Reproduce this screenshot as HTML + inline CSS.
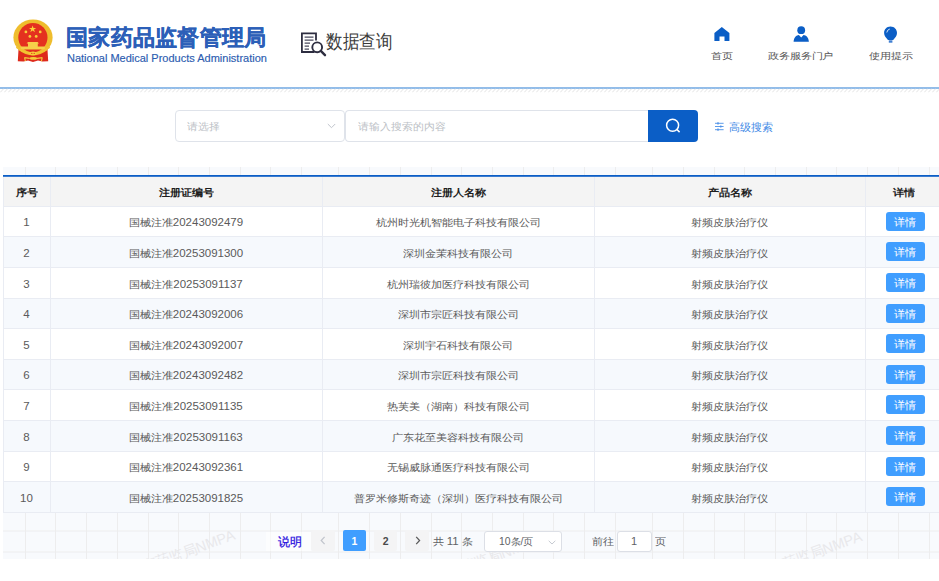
<!DOCTYPE html>
<html><head><meta charset="utf-8"><style>
*{margin:0;padding:0;box-sizing:border-box}
html,body{width:939px;height:581px;overflow:hidden;background:#fff;font-family:"Liberation Sans",sans-serif}
.a{position:absolute;white-space:nowrap}
.c{position:absolute;white-space:nowrap;text-align:center}
.k{display:inline-block;transform:scaleY(0.9)}
.d{font-size:11.5px}
</style></head><body>
<svg class="a" style="left:0;top:0" width="70" height="70" viewBox="0 0 70 70">
 <path d="M18.6 48 L17.8 61.2 L23.5 61.6 L28 60.6 L33 61.9 L38 60.6 L42.5 61.6 L48.2 61.2 L47.4 48 Z" fill="#de2a1c"/>
 <ellipse cx="33" cy="37.4" rx="19.6" ry="18" fill="#efbd2d"/>
 <circle cx="32.9" cy="37.6" r="14.6" fill="#e4311f"/>
 <polygon points="32.6,25.4 33.5,28 36.2,28 34,29.6 34.9,32.2 32.6,30.6 30.3,32.2 31.2,29.6 29,28 31.7,28" fill="#fad33a"/>
 <circle cx="25.9" cy="31.9" r="1.4" fill="#f7cf3a"/><circle cx="40.2" cy="31.9" r="1.4" fill="#f7cf3a"/>
 <circle cx="29.9" cy="36.4" r="1.4" fill="#f7cf3a"/><circle cx="36.2" cy="36.4" r="1.4" fill="#f7cf3a"/>
 <path d="M26.6 43.6 L28 42.1 L37.6 42.1 L39 43.6 Z M28 43.6 H37.8 V46.5 H28 Z M20.5 46.6 H44.8 V49.5 H20.5 Z" fill="#f6d04a"/>
 <path d="M16.5 47 Q33 60 49.5 47" stroke="#f2c232" stroke-width="2.2" fill="none"/>
 <ellipse cx="33" cy="53.4" rx="3.4" ry="1.8" fill="#f5cd3a"/>
 <circle cx="31.8" cy="53.4" r="0.6" fill="#e4311f"/><circle cx="34.2" cy="53.4" r="0.6" fill="#e4311f"/>
 <ellipse cx="33.4" cy="58.4" rx="3.7" ry="1.4" fill="#f5cd3a"/>
 <path d="M24.3 57.6 L29.8 58.4 M37 58.4 L42.5 57.6 M24.6 58 L25.4 61.2 M42.2 58 L41.4 61.2" stroke="#f3ca3a" stroke-width="1.1" fill="none"/>
</svg>
<div class="a" style="left:66px;top:23.5px;font-size:22px;line-height:28px;font-weight:bold;color:#2c5fb8;-webkit-text-stroke:0.3px #2c5fb8;letter-spacing:0.3px">国家药品监督管理局</div>
<div class="a" style="left:67px;top:51.5px;font-size:11px;line-height:13px;color:#2b5cb0;-webkit-text-stroke:0.15px #2b5cb0">National Medical Products Administration</div>
<svg class="a" style="left:300px;top:31px" width="28" height="27" viewBox="0 0 28 27">
 <path d="M14.5 21 H1.9 V2.4 H16 V9.5" fill="none" stroke="#2d2d40" stroke-width="1.8"/>
 <path d="M4.6 6 H13.5 M4.6 9 H13.5 M4.6 12 H10 M4.6 15 H9 M4.6 18 H9" stroke="#4a4a5e" stroke-width="1.25"/>
 <circle cx="17.2" cy="16.3" r="4.9" fill="#fff" stroke="#2d2d40" stroke-width="1.9"/>
 <path d="M20.8 19.9 L25 24.2" stroke="#2d2d40" stroke-width="2.4" stroke-linecap="round"/>
</svg>
<div class="a" style="left:326px;top:29px;font-size:19px;line-height:26px;color:#3a3a3a;transform:scaleX(0.87);transform-origin:0 0">数据查询</div>
<svg class="a" style="left:714px;top:27px" width="16" height="15" viewBox="0 0 16 15">
 <path d="M7.8 0 L15.4 6 V14 H10.5 V9.6 H5.5 V14 H0.4 V6 Z" fill="#0b5ec6"/>
</svg>
<svg class="a" style="left:793px;top:26px" width="17" height="16" viewBox="0 0 17 16">
 <circle cx="8.2" cy="4.2" r="3.9" fill="#0b5ec6"/>
 <path d="M0.6 15.7 C0.9 11.2 3.4 9.1 5.9 8.9 L8.2 11.4 L10.5 8.9 C13.1 9.1 15.6 11.2 15.9 15.7 Z" fill="#0b5ec6"/>
</svg>
<svg class="a" style="left:883px;top:26px" width="15" height="18" viewBox="0 0 15 18">
 <path d="M7.5 0.6 C11.3 0.6 14 3.5 14 6.9 C14 9.8 12.2 11.4 10.2 14 H5 C3 11.4 1.1 9.8 1.1 6.9 C1.1 3.5 3.7 0.6 7.5 0.6 Z" fill="#0b5ec6"/>
 <rect x="5.8" y="14.3" width="3.6" height="2.4" fill="#3f7fd2"/>
 <path d="M3.8 6.5 Q4.2 3.6 6.8 3" stroke="#e8f0fb" stroke-width="0.9" fill="none"/>
</svg>
<div class="a" style="left:711px;top:48.6px;font-size:11px;line-height:14px;color:#555;transform:scale(0.99,0.8);transform-origin:0 50%">首页</div>
<div class="a" style="left:768px;top:48.6px;font-size:11px;line-height:14px;color:#555;transform:scale(0.99,0.8);transform-origin:0 50%">政务服务门户</div>
<div class="a" style="left:869px;top:48.6px;font-size:11px;line-height:14px;color:#555;transform:scale(0.99,0.8);transform-origin:0 50%">使用提示</div>
<div class="a" style="left:0;top:87px;width:939px;height:2px;background:#93bde9"></div>
<svg class="a" style="left:0;top:87px" width="939" height="6" viewBox="0 0 939 6"><defs><pattern id="hp" width="4" height="6" patternUnits="userSpaceOnUse"><path d="M0.3 5.3 L3.8 1.6" stroke="#dcdcdc" stroke-width="0.8"/></pattern></defs><rect x="0" y="0" width="939" height="6" fill="url(#hp)"/></svg>
<div class="a" style="left:175px;top:110px;width:170px;height:32px;border:1px solid #dfe3ea;border-radius:4px;background:#fff"></div>
<div class="a" style="left:345px;top:110px;width:304px;height:32px;border:1px solid #dfe3ea;border-right:0;border-radius:4px 0 0 4px;background:#fff"></div>
<div class="a" style="left:187px;top:119px;font-size:11px;line-height:14px;color:#bcbfc6;transform:scaleY(0.92)">请选择</div>
<svg class="a" style="left:327px;top:123px" width="9" height="6" viewBox="0 0 9 6"><path d="M0.8 1 L4.5 4.7 L8.2 1" fill="none" stroke="#c0c4cc" stroke-width="1"/></svg>
<div class="a" style="left:358px;top:119px;font-size:11px;line-height:14px;color:#bcbfc6;transform:scaleY(0.92)">请输入搜索的内容</div>
<div class="a" style="left:648px;top:110px;width:50px;height:32px;background:#0b5ec6;border-radius:0 4px 4px 0"></div>
<svg class="a" style="left:664px;top:117px" width="18" height="18" viewBox="0 0 18 18">
 <circle cx="8.6" cy="8.2" r="6" fill="none" stroke="#fff" stroke-width="1.5"/>
 <path d="M12.8 12.4 L15.6 15.1" stroke="#fff" stroke-width="1.5"/>
</svg>
<svg class="a" style="left:714px;top:121px" width="11" height="11" viewBox="0 0 11 11">
 <path d="M1 2.3 H9.6 M1 5.5 H9.6 M1 8.7 H9.6" stroke="#4a8fe6" stroke-width="0.9"/>
 <path d="M4 1.2 V3.4 M6.8 4.4 V6.6 M4 7.6 V9.8" stroke="#4a8fe6" stroke-width="1.3"/>
</svg>
<div class="a" style="left:728.5px;top:120px;font-size:11px;line-height:14px;color:#3f8ae6">高级搜索</div>
<svg class="a" style="left:3px;top:166.5px" width="936" height="392.2" viewBox="0 0 936 392.2"><rect width="100%" height="100%" fill="#f8fafd"/><rect x="22" y="0" width="1" height="392.2" fill="#ededee"/><rect x="52" y="0" width="1" height="392.2" fill="#ededee"/><rect x="83" y="0" width="1" height="392.2" fill="#ededee"/><rect x="114" y="0" width="1" height="392.2" fill="#ededee"/><rect x="145" y="0" width="1" height="392.2" fill="#ededee"/><rect x="175" y="0" width="1" height="392.2" fill="#ededee"/><rect x="206" y="0" width="1" height="392.2" fill="#ededee"/><rect x="237" y="0" width="1" height="392.2" fill="#ededee"/><rect x="267" y="0" width="1" height="392.2" fill="#ededee"/><rect x="298" y="0" width="1" height="392.2" fill="#ededee"/><rect x="335" y="0" width="1" height="392.2" fill="#ededee"/><rect x="366" y="0" width="1" height="392.2" fill="#ededee"/><rect x="397" y="0" width="1" height="392.2" fill="#ededee"/><rect x="428" y="0" width="1" height="392.2" fill="#ededee"/><rect x="458" y="0" width="1" height="392.2" fill="#ededee"/><rect x="489" y="0" width="1" height="392.2" fill="#ededee"/><rect x="520" y="0" width="1" height="392.2" fill="#ededee"/><rect x="550" y="0" width="1" height="392.2" fill="#ededee"/><rect x="581" y="0" width="1" height="392.2" fill="#ededee"/><rect x="612" y="0" width="1" height="392.2" fill="#ededee"/><rect x="649" y="0" width="1" height="392.2" fill="#ededee"/><rect x="680" y="0" width="1" height="392.2" fill="#ededee"/><rect x="711" y="0" width="1" height="392.2" fill="#ededee"/><rect x="741" y="0" width="1" height="392.2" fill="#ededee"/><rect x="772" y="0" width="1" height="392.2" fill="#ededee"/><rect x="803" y="0" width="1" height="392.2" fill="#ededee"/><rect x="833" y="0" width="1" height="392.2" fill="#ededee"/><rect x="864" y="0" width="1" height="392.2" fill="#ededee"/><rect x="895" y="0" width="1" height="392.2" fill="#ededee"/><rect x="926" y="0" width="1" height="392.2" fill="#ededee"/><rect x="0" y="384.50" width="936" height="1" fill="#ededee"/><rect x="0" y="363.50" width="936" height="1" fill="#ededee"/><rect x="0" y="343.50" width="936" height="1" fill="#ededee"/><rect x="0" y="323.50" width="936" height="1" fill="#ededee"/><rect x="0" y="302.50" width="936" height="1" fill="#ededee"/><rect x="0" y="281.50" width="936" height="1" fill="#ededee"/><rect x="0" y="261.50" width="936" height="1" fill="#ededee"/><rect x="0" y="241.50" width="936" height="1" fill="#ededee"/><rect x="0" y="220.50" width="936" height="1" fill="#ededee"/><rect x="0" y="199.50" width="936" height="1" fill="#ededee"/><rect x="0" y="179.50" width="936" height="1" fill="#ededee"/><rect x="0" y="159.50" width="936" height="1" fill="#ededee"/><rect x="0" y="138.50" width="936" height="1" fill="#ededee"/><rect x="0" y="117.50" width="936" height="1" fill="#ededee"/><rect x="0" y="97.50" width="936" height="1" fill="#ededee"/><rect x="0" y="77.50" width="936" height="1" fill="#ededee"/><rect x="0" y="56.50" width="936" height="1" fill="#ededee"/><rect x="0" y="35.50" width="936" height="1" fill="#ededee"/><rect x="0" y="15.50" width="936" height="1" fill="#ededee"/><text x="233.0" y="372.0" text-anchor="end" transform="rotate(-20 233.0 372.0)" font-size="14.5" fill="#e8e8eb" font-family="Liberation Sans, sans-serif">国家药监局NMPA</text><text x="538.0" y="377.5" text-anchor="end" transform="rotate(-20 538.0 377.5)" font-size="14.5" fill="#e8e8eb" font-family="Liberation Sans, sans-serif">国家药监局NMPA</text><text x="860.0" y="373.5" text-anchor="end" transform="rotate(-20 860.0 373.5)" font-size="14.5" fill="#e8e8eb" font-family="Liberation Sans, sans-serif">国家药监局NMPA</text></svg>
<div class="a" style="left:3px;top:175px;width:940px;height:1px;background:#0b5ec6"></div>
<div class="a" style="left:3px;top:176px;width:940px;height:1px;background:#3a7bd0"></div>
<div class="a" style="left:3px;top:177px;width:940px;height:29px;background:#f4f4f4"></div>
<div class="a" style="left:3px;top:207px;width:940px;height:29px;background:#fff"></div>
<div class="a" style="left:3px;top:237px;width:940px;height:30px;background:#f6f9fd"></div>
<div class="a" style="left:3px;top:268px;width:940px;height:30px;background:#fff"></div>
<div class="a" style="left:3px;top:299px;width:940px;height:29px;background:#f6f9fd"></div>
<div class="a" style="left:3px;top:329px;width:940px;height:30px;background:#fff"></div>
<div class="a" style="left:3px;top:360px;width:940px;height:29px;background:#f6f9fd"></div>
<div class="a" style="left:3px;top:390px;width:940px;height:30px;background:#fff"></div>
<div class="a" style="left:3px;top:421px;width:940px;height:30px;background:#f6f9fd"></div>
<div class="a" style="left:3px;top:452px;width:940px;height:29px;background:#fff"></div>
<div class="a" style="left:3px;top:482px;width:940px;height:30px;background:#f6f9fd"></div>
<div class="a" style="left:3px;top:206px;width:940px;height:1px;background:#e9ecf3"></div>
<div class="a" style="left:3px;top:236px;width:940px;height:1px;background:#e9ecf3"></div>
<div class="a" style="left:3px;top:267px;width:940px;height:1px;background:#e9ecf3"></div>
<div class="a" style="left:3px;top:298px;width:940px;height:1px;background:#e9ecf3"></div>
<div class="a" style="left:3px;top:328px;width:940px;height:1px;background:#e9ecf3"></div>
<div class="a" style="left:3px;top:359px;width:940px;height:1px;background:#e9ecf3"></div>
<div class="a" style="left:3px;top:389px;width:940px;height:1px;background:#e9ecf3"></div>
<div class="a" style="left:3px;top:420px;width:940px;height:1px;background:#e9ecf3"></div>
<div class="a" style="left:3px;top:451px;width:940px;height:1px;background:#e9ecf3"></div>
<div class="a" style="left:3px;top:481px;width:940px;height:1px;background:#e9ecf3"></div>
<div class="a" style="left:3px;top:512px;width:940px;height:1px;background:#e9ecf3"></div>
<div class="a" style="left:3px;top:177px;width:1px;height:336px;background:#e9ecf3"></div>
<div class="a" style="left:50px;top:177px;width:1px;height:336px;background:#e9ecf3"></div>
<div class="a" style="left:322px;top:177px;width:1px;height:336px;background:#e9ecf3"></div>
<div class="a" style="left:594px;top:177px;width:1px;height:336px;background:#e9ecf3"></div>
<div class="a" style="left:865px;top:177px;width:1px;height:336px;background:#e9ecf3"></div>
<div class="c" style="left:-33.5px;width:120px;top:184.5px;font-size:11.2px;line-height:14px;font-weight:bold;color:#1e1e1e;transform:scaleY(0.9)">序号</div>
<div class="c" style="left:126.0px;width:120px;top:184.5px;font-size:11.2px;line-height:14px;font-weight:bold;color:#1e1e1e;transform:scaleY(0.9)">注册证编号</div>
<div class="c" style="left:398.0px;width:120px;top:184.5px;font-size:11.2px;line-height:14px;font-weight:bold;color:#1e1e1e;transform:scaleY(0.9)">注册人名称</div>
<div class="c" style="left:669.5px;width:120px;top:184.5px;font-size:11.2px;line-height:14px;font-weight:bold;color:#1e1e1e;transform:scaleY(0.9)">产品名称</div>
<div class="c" style="left:844.0px;width:120px;top:184.5px;font-size:11.2px;line-height:14px;font-weight:bold;color:#1e1e1e;transform:scaleY(0.9)">详情</div>
<div class="c" style="left:-123.5px;width:300px;top:215.30px;font-size:11px;line-height:14px;color:#5a5a5a"><span class="d">1</span></div>
<div class="c" style="left:36.0px;width:300px;top:215.30px;font-size:11px;line-height:14px;color:#5a5a5a"><span class="k">国械注准</span><span class="d">20243092479</span></div>
<div class="c" style="left:308.0px;width:300px;top:215.30px;font-size:11px;line-height:14px;color:#5a5a5a"><span class="k">杭州时光机智能电子科技有限公司</span></div>
<div class="c" style="left:579.5px;width:300px;top:215.30px;font-size:11px;line-height:14px;color:#5a5a5a"><span class="k">射频皮肤治疗仪</span></div>
<div class="c" style="left:885.5px;top:211.70px;width:39px;height:19px;background:#409eff;border-radius:3px;color:#fff;font-size:11px;line-height:20.2px">详情</div>
<div class="c" style="left:-123.5px;width:300px;top:245.80px;font-size:11px;line-height:14px;color:#5a5a5a"><span class="d">2</span></div>
<div class="c" style="left:36.0px;width:300px;top:245.80px;font-size:11px;line-height:14px;color:#5a5a5a"><span class="k">国械注准</span><span class="d">20253091300</span></div>
<div class="c" style="left:308.0px;width:300px;top:245.80px;font-size:11px;line-height:14px;color:#5a5a5a"><span class="k">深圳金茉科技有限公司</span></div>
<div class="c" style="left:579.5px;width:300px;top:245.80px;font-size:11px;line-height:14px;color:#5a5a5a"><span class="k">射频皮肤治疗仪</span></div>
<div class="c" style="left:885.5px;top:242.20px;width:39px;height:19px;background:#409eff;border-radius:3px;color:#fff;font-size:11px;line-height:20.2px">详情</div>
<div class="c" style="left:-123.5px;width:300px;top:276.80px;font-size:11px;line-height:14px;color:#5a5a5a"><span class="d">3</span></div>
<div class="c" style="left:36.0px;width:300px;top:276.80px;font-size:11px;line-height:14px;color:#5a5a5a"><span class="k">国械注准</span><span class="d">20253091137</span></div>
<div class="c" style="left:308.0px;width:300px;top:276.80px;font-size:11px;line-height:14px;color:#5a5a5a"><span class="k">杭州瑞彼加医疗科技有限公司</span></div>
<div class="c" style="left:579.5px;width:300px;top:276.80px;font-size:11px;line-height:14px;color:#5a5a5a"><span class="k">射频皮肤治疗仪</span></div>
<div class="c" style="left:885.5px;top:273.20px;width:39px;height:19px;background:#409eff;border-radius:3px;color:#fff;font-size:11px;line-height:20.2px">详情</div>
<div class="c" style="left:-123.5px;width:300px;top:307.30px;font-size:11px;line-height:14px;color:#5a5a5a"><span class="d">4</span></div>
<div class="c" style="left:36.0px;width:300px;top:307.30px;font-size:11px;line-height:14px;color:#5a5a5a"><span class="k">国械注准</span><span class="d">20243092006</span></div>
<div class="c" style="left:308.0px;width:300px;top:307.30px;font-size:11px;line-height:14px;color:#5a5a5a"><span class="k">深圳市宗匠科技有限公司</span></div>
<div class="c" style="left:579.5px;width:300px;top:307.30px;font-size:11px;line-height:14px;color:#5a5a5a"><span class="k">射频皮肤治疗仪</span></div>
<div class="c" style="left:885.5px;top:303.70px;width:39px;height:19px;background:#409eff;border-radius:3px;color:#fff;font-size:11px;line-height:20.2px">详情</div>
<div class="c" style="left:-123.5px;width:300px;top:337.80px;font-size:11px;line-height:14px;color:#5a5a5a"><span class="d">5</span></div>
<div class="c" style="left:36.0px;width:300px;top:337.80px;font-size:11px;line-height:14px;color:#5a5a5a"><span class="k">国械注准</span><span class="d">20243092007</span></div>
<div class="c" style="left:308.0px;width:300px;top:337.80px;font-size:11px;line-height:14px;color:#5a5a5a"><span class="k">深圳宇石科技有限公司</span></div>
<div class="c" style="left:579.5px;width:300px;top:337.80px;font-size:11px;line-height:14px;color:#5a5a5a"><span class="k">射频皮肤治疗仪</span></div>
<div class="c" style="left:885.5px;top:334.20px;width:39px;height:19px;background:#409eff;border-radius:3px;color:#fff;font-size:11px;line-height:20.2px">详情</div>
<div class="c" style="left:-123.5px;width:300px;top:368.30px;font-size:11px;line-height:14px;color:#5a5a5a"><span class="d">6</span></div>
<div class="c" style="left:36.0px;width:300px;top:368.30px;font-size:11px;line-height:14px;color:#5a5a5a"><span class="k">国械注准</span><span class="d">20243092482</span></div>
<div class="c" style="left:308.0px;width:300px;top:368.30px;font-size:11px;line-height:14px;color:#5a5a5a"><span class="k">深圳市宗匠科技有限公司</span></div>
<div class="c" style="left:579.5px;width:300px;top:368.30px;font-size:11px;line-height:14px;color:#5a5a5a"><span class="k">射频皮肤治疗仪</span></div>
<div class="c" style="left:885.5px;top:364.70px;width:39px;height:19px;background:#409eff;border-radius:3px;color:#fff;font-size:11px;line-height:20.2px">详情</div>
<div class="c" style="left:-123.5px;width:300px;top:398.80px;font-size:11px;line-height:14px;color:#5a5a5a"><span class="d">7</span></div>
<div class="c" style="left:36.0px;width:300px;top:398.80px;font-size:11px;line-height:14px;color:#5a5a5a"><span class="k">国械注准</span><span class="d">20253091135</span></div>
<div class="c" style="left:308.0px;width:300px;top:398.80px;font-size:11px;line-height:14px;color:#5a5a5a"><span class="k">热芙美（湖南）科技有限公司</span></div>
<div class="c" style="left:579.5px;width:300px;top:398.80px;font-size:11px;line-height:14px;color:#5a5a5a"><span class="k">射频皮肤治疗仪</span></div>
<div class="c" style="left:885.5px;top:395.20px;width:39px;height:19px;background:#409eff;border-radius:3px;color:#fff;font-size:11px;line-height:20.2px">详情</div>
<div class="c" style="left:-123.5px;width:300px;top:429.80px;font-size:11px;line-height:14px;color:#5a5a5a"><span class="d">8</span></div>
<div class="c" style="left:36.0px;width:300px;top:429.80px;font-size:11px;line-height:14px;color:#5a5a5a"><span class="k">国械注准</span><span class="d">20253091163</span></div>
<div class="c" style="left:308.0px;width:300px;top:429.80px;font-size:11px;line-height:14px;color:#5a5a5a"><span class="k">广东花至美容科技有限公司</span></div>
<div class="c" style="left:579.5px;width:300px;top:429.80px;font-size:11px;line-height:14px;color:#5a5a5a"><span class="k">射频皮肤治疗仪</span></div>
<div class="c" style="left:885.5px;top:426.20px;width:39px;height:19px;background:#409eff;border-radius:3px;color:#fff;font-size:11px;line-height:20.2px">详情</div>
<div class="c" style="left:-123.5px;width:300px;top:460.30px;font-size:11px;line-height:14px;color:#5a5a5a"><span class="d">9</span></div>
<div class="c" style="left:36.0px;width:300px;top:460.30px;font-size:11px;line-height:14px;color:#5a5a5a"><span class="k">国械注准</span><span class="d">20243092361</span></div>
<div class="c" style="left:308.0px;width:300px;top:460.30px;font-size:11px;line-height:14px;color:#5a5a5a"><span class="k">无锡威脉通医疗科技有限公司</span></div>
<div class="c" style="left:579.5px;width:300px;top:460.30px;font-size:11px;line-height:14px;color:#5a5a5a"><span class="k">射频皮肤治疗仪</span></div>
<div class="c" style="left:885.5px;top:456.70px;width:39px;height:19px;background:#409eff;border-radius:3px;color:#fff;font-size:11px;line-height:20.2px">详情</div>
<div class="c" style="left:-123.5px;width:300px;top:490.80px;font-size:11px;line-height:14px;color:#5a5a5a"><span class="d">10</span></div>
<div class="c" style="left:36.0px;width:300px;top:490.80px;font-size:11px;line-height:14px;color:#5a5a5a"><span class="k">国械注准</span><span class="d">20253091825</span></div>
<div class="c" style="left:308.0px;width:300px;top:490.80px;font-size:11px;line-height:14px;color:#5a5a5a"><span class="k">普罗米修斯奇迹（深圳）医疗科技有限公司</span></div>
<div class="c" style="left:579.5px;width:300px;top:490.80px;font-size:11px;line-height:14px;color:#5a5a5a"><span class="k">射频皮肤治疗仪</span></div>
<div class="c" style="left:885.5px;top:487.20px;width:39px;height:19px;background:#409eff;border-radius:3px;color:#fff;font-size:11px;line-height:20.2px">详情</div>
<div class="a" style="left:266px;top:531.6px;width:45px;height:19.4px;background:rgba(255,255,255,0.55)"></div>
<div class="a" style="left:278.3px;top:535.2px;font-size:12.4px;line-height:15px;color:#2a10e0;-webkit-text-stroke:0.25px #2a10e0">说明</div>
<div class="a" style="left:311.2px;top:530.4px;width:23.5px;height:21px;background:#f4f4f5;border-radius:2px"><svg style="position:absolute;left:9px;top:5.6px" width="6" height="9" viewBox="0 0 6 9"><path d="M4.6 0.9 L1.2 4.5 L4.6 8.1" fill="none" stroke="#c0c4cc" stroke-width="1.2"/></svg></div>
<div class="a" style="left:342.8px;top:530.4px;width:23.3px;height:21px;background:#409eff;border-radius:2px"><div class="c" style="left:0;width:100%;top:3.5px;font-size:10.5px;line-height:14px;font-weight:bold;color:#fff">1</div></div>
<div class="a" style="left:373.9px;top:530.4px;width:23.5px;height:21px;background:#f4f4f5;border-radius:2px"><div class="c" style="left:0;width:100%;top:3.5px;font-size:10.5px;line-height:14px;font-weight:bold;color:#4a4a4a">2</div></div>
<div class="a" style="left:405.3px;top:530.4px;width:23.3px;height:21px;background:#f4f4f5;border-radius:2px"><svg style="position:absolute;left:9.3px;top:6px" width="6" height="9" viewBox="0 0 6 9"><path d="M1.2 0.9 L4.6 4.5 L1.2 8.1" fill="none" stroke="#5a5a5a" stroke-width="1.25"/></svg></div>
<div class="a" style="left:432.5px;top:534px;font-size:11px;line-height:14px;color:#606266"><span class="k">共</span><span class="d"> 11 </span><span class="k">条</span></div>
<div class="a" style="left:483.5px;top:531.4px;width:78px;height:21px;border:1px solid #dcdfe6;border-radius:3px;background:#fff"></div>
<div class="a" style="left:498.8px;top:534.2px;font-size:11px;line-height:14px;color:#606266;transform:scaleX(0.9);transform-origin:0 0"><span class="d">10</span><span class="k">条</span><span class="d">/</span><span class="k">页</span></div>
<svg class="a" style="left:548px;top:540px" width="8" height="5" viewBox="0 0 8 5"><path d="M0.7 0.8 L4 4 L7.3 0.8" fill="none" stroke="#c0c4cc" stroke-width="0.9"/></svg>
<div class="a" style="left:592px;top:534px;font-size:11px;line-height:14px;color:#606266"><span class="k">前往</span></div>
<div class="a" style="left:616.6px;top:530.8px;width:35px;height:21px;border:1px solid #dcdfe6;border-radius:3px;background:#fff"></div>
<div class="c" style="left:616.6px;width:35px;top:534.2px;font-size:11px;line-height:14px;color:#606266">1</div>
<div class="a" style="left:655px;top:534px;font-size:11px;line-height:14px;color:#606266"><span class="k">页</span></div>
</body></html>
